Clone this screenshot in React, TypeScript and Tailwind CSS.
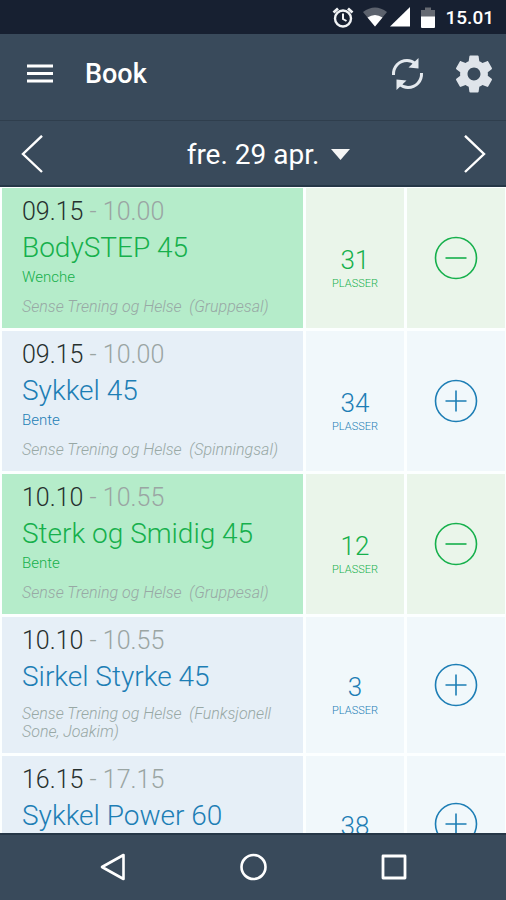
import { useState } from "react";

type Session = {
  start: string;
  end: string;
  title: string;
  instructor?: string;
  room?: string;
  spots: number;
  booked: boolean;
};

const initialSessions: Session[] = [
  { start: "09.15", end: "10.00", title: "BodySTEP 45", instructor: "Wenche", room: "(Gruppesal)", spots: 31, booked: true },
  { start: "09.15", end: "10.00", title: "Sykkel 45", instructor: "Bente", room: "(Spinningsal)", spots: 34, booked: false },
  { start: "10.10", end: "10.55", title: "Sterk og Smidig 45", instructor: "Bente", room: "(Gruppesal)", spots: 12, booked: true },
  { start: "10.10", end: "10.55", title: "Sirkel Styrke 45", room: "(Funksjonell Sone, Joakim)", spots: 3, booked: false },
  { start: "16.15", end: "17.15", title: "Sykkel Power 60", spots: 38, booked: false },
];

function StatusBar() {
  return (
    <div className="flex h-[34px] shrink-0 items-center justify-end bg-[#172031] pt-0.5 pr-3 text-white">
      <svg className="mr-2 h-6 w-6" viewBox="0 0 24 24" fill="none" stroke="#f1f3f5" aria-hidden="true">
        <circle cx="12" cy="12.500" r="8" strokeWidth="2.4" />
        <path d="M12 7.500v5.500l3.500 2" strokeWidth="2" />
        <path d="M2.500 6.500 7 2.500M21.500 6.500 17 2.500" strokeWidth="2.800" />
      </svg>
      <svg className="mr-px h-6 w-6" viewBox="0 0 24 24" aria-hidden="true">
        <path d="M0 6Q12-3 24 6L12 20.500Z" fill="#5c626d" />
        <path d="M4.500 11.500Q12 6.500 19.500 11.500L12 20.500Z" fill="#fff" />
      </svg>
      <svg className="mr-1.5 h-6 w-6" viewBox="0 0 24 24" aria-hidden="true">
        <path d="M22 1V20.500H2Z" fill="#fff" />
      </svg>
      <svg className="mr-2 h-6 w-5" viewBox="0 0 20 24" aria-hidden="true">
        <path d="M7 1.500h6V4h4v7H3V4h4Z" fill="#666a72" />
        <path d="M3 10.500h14v10.500q0 1-1 1H4q-1 0-1-1Z" fill="#fff" />
      </svg>
      <span className="text-[19px] leading-6 font-medium">15.01</span>
    </div>
  );
}

function Header() {
  return (
    <header className="flex h-[87px] shrink-0 items-center border-b border-[#2f3e4d] pr-3 pb-1.5 pl-6">
      <button type="button" aria-label="Meny" className="flex h-8 w-8 items-center justify-center">
        <svg className="h-8 w-8" viewBox="0 0 32 32" stroke="#fff" strokeWidth="3" aria-hidden="true">
          <path d="M3 8h26M3 15.500h26M3 23h26" />
        </svg>
      </button>
      <h1 className="ml-[29px] flex-1 text-[27px] leading-8 font-medium text-white">Book</h1>
      <button type="button" aria-label="Oppdater" className="mr-[29px]">
        <svg className="h-9 w-9" viewBox="0 0 36 36" fill="none" aria-hidden="true">
          <path d="M4.500 19C4 11 10 4.500 18 4.500c3 0 6 1 8.500 3.500" stroke="#e4e9ee" strokeWidth="3" />
          <path d="M32.500 17C33 25 27 31.500 19 31.500c-3 0-6-1-8.500-3.500" stroke="#e4e9ee" strokeWidth="3" />
          <path d="M29.500 2v10.500L19.500 11.500ZM7.500 34V23.500L17.500 24.500Z" fill="#e4e9ee" />
        </svg>
      </button>
      <button type="button" aria-label="Innstillinger">
        <svg className="h-10 w-10" viewBox="1.200 1.200 21.600 21.600" fill="#dfe4ea" aria-hidden="true">
          <path d="M19.430 12.980c.04-.32.07-.64.07-.98s-.03-.66-.07-.98l2.110-1.650c.19-.15.24-.42.12-.64l-2-3.460c-.12-.22-.39-.3-.61-.22l-2.490 1c-.52-.4-1.080-.73-1.690-.98l-.38-2.650C14.460 2.180 14.250 2 14 2h-4c-.25 0-.46.18-.49.42l-.38 2.650c-.61.25-1.170.59-1.690.98l-2.490-1c-.23-.09-.49 0-.61.22l-2 3.460c-.13.22-.07.49.12.64l2.110 1.650c-.04.32-.07.65-.07.98s.03.66.07.98l-2.110 1.650c-.19.15-.24.42-.12.64l2 3.460c.12.22.39.3.61.22l2.490-1c.52.4 1.080.73 1.690.98l.38 2.650c.03.24.24.42.49.42h4c.25 0 .46-.18.49-.42l.38-2.650c.61-.25 1.170-.59 1.690-.98l2.490 1c.23.09.49 0 .61-.22l2-3.460c.12-.22.07-.49-.12-.64l-2.110-1.650zM12 15.500c-1.930 0-3.500-1.570-3.500-3.500s1.570-3.500 3.500-3.500 3.500 1.570 3.500 3.500-1.570 3.500-3.500 3.500z" />
        </svg>
      </button>
    </header>
  );
}

function DateBar() {
  return (
    <div className="flex h-[66px] shrink-0 items-center justify-between border-b-2 border-[#263747] px-5 pt-1 text-white">
      <button type="button" aria-label="Forrige dag">
        <svg className="h-10 w-6" viewBox="0 0 24 40" fill="none" stroke="#fff" strokeWidth="2.400" aria-hidden="true">
          <path d="M22 .8 3 19l19 18" />
        </svg>
      </button>
      <button type="button" className="ml-8 flex items-center gap-3 text-[28px] leading-9">
        fre. 29 apr.
        <svg className="h-3 w-5" viewBox="0 0 20 12" aria-hidden="true">
          <path d="M0 0h19L9.500 11Z" fill="#f5f5f5" />
        </svg>
      </button>
      <button type="button" aria-label="Neste dag">
        <svg className="h-10 w-6" viewBox="0 0 24 40" fill="none" stroke="#fff" strokeWidth="2.400" aria-hidden="true">
          <path d="M3 .8 22 19 3 37" />
        </svg>
      </button>
    </div>
  );
}

function SessionRow({ session, onToggle }: { session: Session; onToggle: () => void }) {
  const { booked } = session;
  const side = booked ? "bg-[#eaf5ea]" : "bg-[#f1f8fb]";
  return (
    <li className={`grid min-h-[136px] grid-cols-[1fr_98px_98px] gap-[3px] ${booked ? "text-[#16b04c]" : "text-[#1d7eb5]"}`}>
      <div className={`px-5 pt-2 pb-3 ${booked ? "bg-[#b5ecca]" : "bg-[#e6eff7]"}`}>
        <p className="text-[25px] leading-8 font-light text-[#9aa5a3]">
          <span className="text-[#26302e]">{session.start}</span> - {session.end}
        </p>
        <h2 className="text-[28px] leading-10 font-light">{session.title}</h2>
        {session.instructor && <p className="pb-1 text-[15px] leading-[18px] font-light">{session.instructor}</p>}
        {session.room && (
          <p className="mt-2 text-base leading-[18px] font-light whitespace-pre-wrap text-[#98a8a5] italic">
            {"Sense Trening og Helse  " + session.room}
          </p>
        )}
      </div>
      <div className={`flex flex-col items-center justify-center pt-5 font-light ${side}`}>
        <span className="text-[26px] leading-8">{session.spots}</span>
        <span className="text-[11px] leading-4">PLASSER</span>
      </div>
      <div className={`flex items-center justify-center ${side}`}>
        <button type="button" aria-label={(booked ? "Avbestill " : "Bestill ") + session.title} onClick={onToggle}>
          <svg className="h-11 w-11" viewBox="0 0 44 44" fill="none" stroke="currentColor" strokeWidth="1.600" aria-hidden="true">
            <circle cx="22" cy="22" r="20.500" />
            <path d={booked ? "M11.500 22h21" : "M11.500 22h21M22 11.500v21"} />
          </svg>
        </button>
      </div>
    </li>
  );
}

function NavBar() {
  return (
    <nav aria-label="System" className="flex h-[67px] shrink-0 items-center justify-center gap-[108px] border-t-2 border-[#263747] pb-0.5">
      <button type="button" aria-label="Tilbake">
        <svg className="h-8 w-8" viewBox="0 0 32 32" fill="none" stroke="#fff" strokeWidth="2.600" strokeLinejoin="round" aria-hidden="true">
          <path d="M26.500 4v24L5 16Z" />
        </svg>
      </button>
      <button type="button" aria-label="Hjem">
        <svg className="h-8 w-8" viewBox="0 0 32 32" fill="none" stroke="#fff" strokeWidth="2.600" aria-hidden="true">
          <circle cx="16.500" cy="16" r="12" />
        </svg>
      </button>
      <button type="button" aria-label="Oversikt">
        <svg className="h-8 w-8" viewBox="0 0 32 32" fill="none" stroke="#fff" strokeWidth="2.800" strokeLinejoin="round" aria-hidden="true">
          <path d="M6 5h22v22H6Z" />
        </svg>
      </button>
    </nav>
  );
}

export default function App() {
  const [sessions, setSessions] = useState(initialSessions);
  const toggle = (index: number) =>
    setSessions(sessions.map((s, i) => (i === index ? { ...s, booked: !s.booked } : s)));

  return (
    <div className="flex h-screen flex-col bg-[#394a5b] font-['Roboto',sans-serif]">
      <StatusBar />
      <Header />
      <DateBar />
      <main className="min-h-0 flex-1 overflow-y-auto bg-[#fcffff] [scrollbar-width:none]">
        <ul className="flex flex-col gap-[3px] pt-px pr-px pl-0.5">
          {sessions.map((session, i) => (
            <SessionRow key={session.title} session={session} onToggle={() => toggle(i)} />
          ))}
        </ul>
      </main>
      <NavBar />
    </div>
  );
}
